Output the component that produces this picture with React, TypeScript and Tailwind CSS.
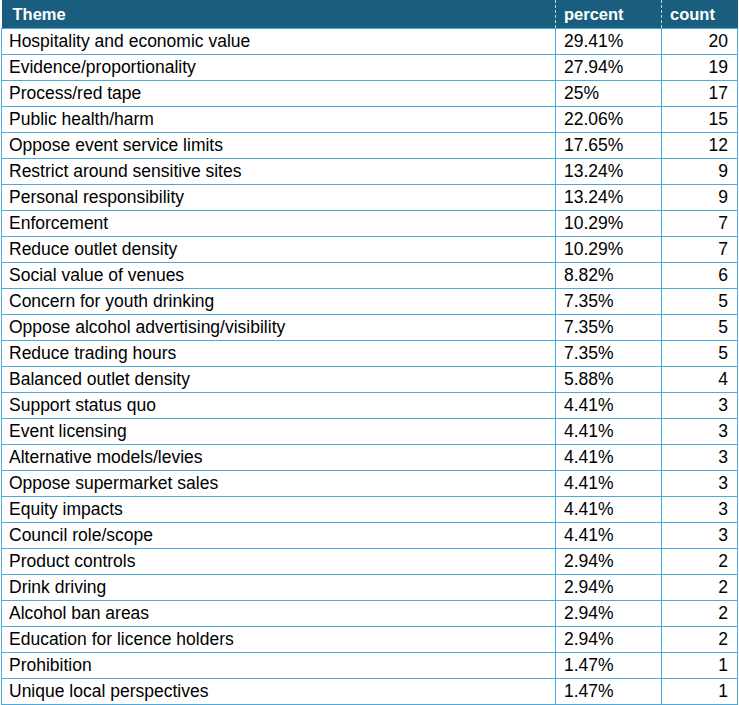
const rows: [string, string, number][] = [
  ["Hospitality and economic value", "29.41%", 20],
  ["Evidence/proportionality", "27.94%", 19],
  ["Process/red tape", "25%", 17],
  ["Public health/harm", "22.06%", 15],
  ["Oppose event service limits", "17.65%", 12],
  ["Restrict around sensitive sites", "13.24%", 9],
  ["Personal responsibility", "13.24%", 9],
  ["Enforcement", "10.29%", 7],
  ["Reduce outlet density", "10.29%", 7],
  ["Social value of venues", "8.82%", 6],
  ["Concern for youth drinking", "7.35%", 5],
  ["Oppose alcohol advertising/visibility", "7.35%", 5],
  ["Reduce trading hours", "7.35%", 5],
  ["Balanced outlet density", "5.88%", 4],
  ["Support status quo", "4.41%", 3],
  ["Event licensing", "4.41%", 3],
  ["Alternative models/levies", "4.41%", 3],
  ["Oppose supermarket sales", "4.41%", 3],
  ["Equity impacts", "4.41%", 3],
  ["Council role/scope", "4.41%", 3],
  ["Product controls", "2.94%", 2],
  ["Drink driving", "2.94%", 2],
  ["Alcohol ban areas", "2.94%", 2],
  ["Education for licence holders", "2.94%", 2],
  ["Prohibition", "1.47%", 1],
  ["Unique local perspectives", "1.47%", 1],
];

export default function App() {
  return (
    <div className="w-[739px] h-[705px] bg-white pl-px" style={{ fontFamily: "'Liberation Sans', Arial, sans-serif" }}>
      <table className="border-collapse table-fixed w-[736px] text-[17.5px] text-black">
        <colgroup>
          <col className="w-[554px]" />
          <col className="w-[106px]" />
          <col className="w-[76px]" />
        </colgroup>
        <thead>
          <tr className="h-[28px] bg-[#1a5e7f] text-white text-[16.5px]">
            <th className="text-left pl-[11px] font-bold leading-none">Theme</th>
            <th className="text-left pl-[8px] font-bold leading-none border-l border-dashed border-[#c9d6dd]">percent</th>
            <th className="text-left pl-[8px] font-bold leading-none border-l border-dashed border-[#c9d6dd]">count</th>
          </tr>
        </thead>
        <tbody>
          {rows.map(([theme, pct, n]) => (
            <tr key={theme} className="h-[26px]">
              <td className="border border-[#4ea9dd] pl-[7px] pt-px leading-none">{theme}</td>
              <td className="border border-[#4ea9dd] pl-[8px] pt-px leading-none">{pct}</td>
              <td className="border border-[#4ea9dd] pr-[9px] pt-px text-right leading-none">{n}</td>
            </tr>
          ))}
        </tbody>
      </table>
    </div>
  );
}
